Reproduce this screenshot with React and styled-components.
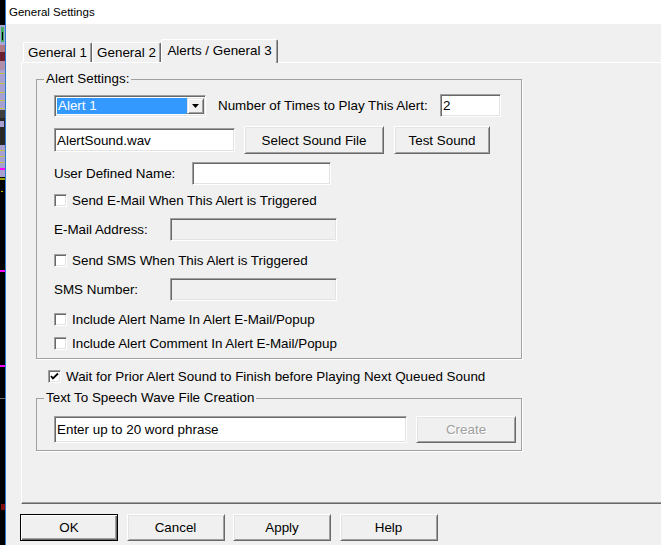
import React from 'react';
import styled, { createGlobalStyle } from 'styled-components';

const Global = createGlobalStyle`
  html, body { margin: 0; padding: 0; width: 661px; height: 545px; overflow: hidden; background: #f0f0f0; }
  #root { width: 661px; height: 545px; }
  * { box-sizing: border-box; }
`;

const Screen = styled.div`
  display: flex;
  width: 661px;
  height: 545px;
  font-family: "Liberation Sans", Arial, sans-serif;
  font-size: 13.4px;
  color: #000;
`;

const ChartStrip = styled.svg`
  display: block;
  flex: none;
  width: 5px;
  height: 545px;
`;

const WindowEdge = styled.div`
  flex: none;
  width: 1px;
  background: #2b79d0;
`;

const Dialog = styled.div`
  flex: 1;
  min-width: 0;
  display: flex;
  flex-direction: column;
  background: #f0f0f0;
`;

const TitleBar = styled.div`
  flex: none;
  height: 24px;
  background: #fff;
  display: flex;
  align-items: center;
  padding-left: 3px;
  font-size: 11.5px;
`;

const Body = styled.div`
  flex: 1;
  min-height: 0;
  display: flex;
  flex-direction: column;
  padding: 15px 0 4px 15px;
`;

const TabStrip = styled.div`
  flex: none;
  display: flex;
  align-items: flex-end;
  height: 23px;
  padding-left: 2px;
  position: relative;
  z-index: 1;
`;

const Tab = styled.div`
  width: ${p => p.$w}px;
  height: ${p => (p.$active ? 24 : 20)}px;
  margin-bottom: ${p => (p.$active ? -1 : 0)}px;
  padding-bottom: ${p => (p.$active ? 2 : 0)}px;
  display: flex;
  align-items: center;
  justify-content: center;
  background: #f0f0f0;
  border-top: 1px solid #fff;
  border-left: 1px solid #fff;
  border-right: 1px solid #696969;
  box-shadow: inset -1px 0 0 #a0a0a0;
  border-radius: 2px 2px 0 0;
  white-space: nowrap;
`;

const Panel = styled.div`
  flex: 1;
  display: flex;
  flex-direction: column;
  border-top: 1px solid #fff;
  border-left: 1px solid #fff;
  border-bottom: 1px solid #696969;
  box-shadow: inset 0 -1px 0 #a0a0a0;
  padding: 8px 0 0 14px;
`;

const Group = styled.fieldset`
  margin: ${p => p.$mt || 0}px 0 0;
  padding: 0;
  width: 486px;
  min-width: 0;
  border: 1px solid #a0a0a0;
  box-shadow: 1px 1px 0 #fff;
`;

const Legend = styled.legend`
  margin-left: 7px;
  padding: 0 2px;
  line-height: 16px;
`;

const GroupBody = styled.div`
  display: flex;
  flex-direction: column;
  padding: ${p => p.$pt}px 0 ${p => p.$pb}px 17px;
`;

const Row = styled.div`
  display: flex;
  align-items: center;
  height: ${p => p.$h}px;
  margin-top: ${p => p.$mt || 0}px;
  margin-left: ${p => p.$ml || 0}px;
  white-space: nowrap;
`;

const Label = styled.div`
  flex: none;
  width: ${p => (p.$w ? `${p.$w}px` : 'auto')};
  margin-left: ${p => p.$ml || 0}px;
`;

const Field = styled.div`
  flex: none;
  width: ${p => p.$w}px;
  height: ${p => p.$h || 23}px;
  margin-left: ${p => p.$ml || 0}px;
  border: 1px solid;
  border-color: #a0a0a0 #fff #fff #a0a0a0;
  box-shadow: inset 1px 1px 0 #696969, inset -1px -1px 0 #e3e3e3;
  background: ${p => (p.$disabled ? '#f0f0f0' : '#fff')};
  display: flex;
  align-items: center;
  padding-left: 2px;
  overflow: hidden;
`;

const Combo = styled.div`
  flex: none;
  width: 152px;
  height: 22px;
  display: flex;
  padding: 2px 1px 2px 2px;
  border: 1px solid;
  border-color: #a0a0a0 #fff #fff #a0a0a0;
  box-shadow: inset 1px 1px 0 #696969, inset -1px -1px 0 #e3e3e3;
  background: #fff;
`;

const ComboValue = styled.div`
  flex: 1;
  background: #3399ff;
  color: #fff;
  display: flex;
  align-items: center;
  padding-left: 1px;
`;

const ComboArrow = styled.div`
  flex: none;
  width: 17px;
  display: flex;
  align-items: center;
  justify-content: center;
  background: #f0f0f0;
  border: 1px solid;
  border-color: #e3e3e3 #696969 #696969 #e3e3e3;
  box-shadow: inset 1px 1px 0 #fff, inset -1px -1px 0 #a0a0a0;
`;

const Button = styled.div`
  flex: none;
  width: ${p => p.$w}px;
  height: ${p => p.$h}px;
  margin-left: ${p => p.$ml || 0}px;
  display: flex;
  align-items: center;
  justify-content: center;
  background: #f0f0f0;
  color: ${p => (p.$disabled ? '#a0a0a0' : '#000')};
  text-shadow: ${p => (p.$disabled ? '1px 1px 0 #fff' : 'none')};
  border: 1px solid;
  border-color: ${p => (p.$default ? '#000' : '#fff #696969 #696969 #fff')};
  box-shadow: ${p =>
    p.$default
      ? 'inset 1px 1px 0 #fff, inset -1px -1px 0 #696969, inset -2px -2px 0 #a0a0a0'
      : 'inset 1px 1px 0 #e3e3e3, inset -1px -1px 0 #a0a0a0'};
  white-space: nowrap;
`;

const Box = styled.div`
  flex: none;
  width: 13px;
  height: 13px;
  margin-right: 5px;
  background: #fff;
  border: 1px solid;
  border-color: #a0a0a0 #fff #fff #a0a0a0;
  box-shadow: inset 1px 1px 0 #696969, inset -1px -1px 0 #e3e3e3;
  display: flex;
  align-items: center;
  justify-content: center;
`;

const ButtonBar = styled.div`
  flex: none;
  display: flex;
  gap: 8.5px;
  margin: 10px 0 0 -1px;
  height: 27px;
`;

const CheckBox = ({ checked }) => (
  <Box>
    {checked && (
      <svg width="9" height="9" viewBox="0 0 9 9">
        <polyline points="1,4 3,6.5 8,1.5" fill="none" stroke="#000" strokeWidth="1.8" />
      </svg>
    )}
  </Box>
);

const Check = ({ checked, children, mt, ml }) => (
  <Row $h={13} $mt={mt} $ml={ml}>
    <CheckBox checked={checked} />
    <span>{children}</span>
  </Row>
);

const Strip = () => (
  <ChartStrip viewBox="0 0 5 545" preserveAspectRatio="none">
    <rect x="0" y="0" width="5" height="545" fill="#000" />
    <rect x="0" y="25" width="5" height="20" fill="#a8a8d8" />
    <rect x="1" y="27" width="3" height="15" fill="#40b060" />
    <rect x="2" y="32" width="1" height="8" fill="#000" />
    <rect x="0" y="45" width="5" height="7" fill="#b07880" />
    <rect x="0" y="52" width="5" height="9" fill="#6a2030" />
    <rect x="0" y="61" width="5" height="9" fill="#b090a8" />
    <rect x="0" y="70" width="5" height="40" fill="#a8a0d0" />
    {[73, 83, 92, 100, 108].map(y => (
      <rect key={y} x="0" y={y} width="5" height="1" fill="#c8c040" />
    ))}
    <rect x="0" y="110" width="5" height="8" fill="#404040" />
    <rect x="0" y="118" width="5" height="27" fill="#282828" />
    <rect x="0" y="121" width="4" height="6" fill="#a8a0d0" />
    <rect x="0" y="145" width="5" height="32" fill="#a8a0d0" />
    {[150, 156, 162].map(y => (
      <rect key={y} x="0" y={y} width="5" height="1" fill="#c8c040" />
    ))}
    <rect x="0" y="168" width="5" height="2" fill="#ff00ff" />
    <rect x="0" y="178" width="5" height="2" fill="#a0a000" />
    <rect x="1" y="191" width="2" height="1" fill="#c8c000" />
    <rect x="0" y="270" width="5" height="2" fill="#ff00ff" />
    <rect x="0" y="365" width="5" height="2" fill="#ff00ff" />
    <rect x="0" y="398" width="5" height="1" fill="#707070" />
    <rect x="1" y="504" width="4" height="6" fill="#801010" />
  </ChartStrip>
);

export default function App() {
  return (
    <>
      <Global />
      <Screen>
        <Strip />
        <WindowEdge />
        <Dialog>
          <TitleBar>General Settings</TitleBar>
          <Body>
            <TabStrip>
              <Tab $w={69}>General 1</Tab>
              <Tab $w={69}>General 2</Tab>
              <Tab $w={117} $active>Alerts / General 3</Tab>
            </TabStrip>
            <Panel>
              <Group>
                <Legend>Alert Settings:</Legend>
                <GroupBody $pt={7} $pb={8}>
                  <Row $h={23}>
                    <Combo>
                      <ComboValue>Alert 1</ComboValue>
                      <ComboArrow>
                        <svg width="7" height="4" viewBox="0 0 7 4">
                          <polygon points="0,0 7,0 3.5,4" fill="#000" />
                        </svg>
                      </ComboArrow>
                    </Combo>
                    <Label $ml={12} $w={222}>Number of Times to Play This Alert:</Label>
                    <Field $w={61}>2</Field>
                  </Row>
                  <Row $h={28} $mt={9}>
                    <Field $w={181} $h={24}>AlertSound.wav</Field>
                    <Button $w={140} $h={28} $ml={9}>Select Sound File</Button>
                    <Button $w={96} $h={28} $ml={10}>Test Sound</Button>
                  </Row>
                  <Row $h={23} $mt={8}>
                    <Label $w={138}>User Defined Name:</Label>
                    <Field $w={139} />
                  </Row>
                  <Check mt={9}>Send E-Mail When This Alert is Triggered</Check>
                  <Row $h={23} $mt={11}>
                    <Label $w={116}>E-Mail Address:</Label>
                    <Field $w={167} $disabled />
                  </Row>
                  <Check mt={13}>Send SMS When This Alert is Triggered</Check>
                  <Row $h={23} $mt={11}>
                    <Label $w={116}>SMS Number:</Label>
                    <Field $w={167} $disabled />
                  </Row>
                  <Check mt={12}>Include Alert Name In Alert E-Mail/Popup</Check>
                  <Check mt={11}>Include Alert Comment In Alert E-Mail/Popup</Check>
                </GroupBody>
              </Group>
              <Check checked mt={11} ml={12}>
                Wait for Prior Alert Sound to Finish before Playing Next Queued Sound
              </Check>
              <Group $mt={7}>
                <Legend>Text To Speech Wave File Creation</Legend>
                <GroupBody $pt={10} $pb={7}>
                  <Row $h={27}>
                    <Field $w={353} $h={27}>Enter up to 20 word phrase</Field>
                    <Button $w={100} $h={27} $ml={9} $disabled>Create</Button>
                  </Row>
                </GroupBody>
              </Group>
            </Panel>
            <ButtonBar>
              <Button $w={98} $h={27} $default>OK</Button>
              <Button $w={98} $h={27}>Cancel</Button>
              <Button $w={98} $h={27}>Apply</Button>
              <Button $w={98} $h={27}>Help</Button>
            </ButtonBar>
          </Body>
        </Dialog>
      </Screen>
    </>
  );
}
